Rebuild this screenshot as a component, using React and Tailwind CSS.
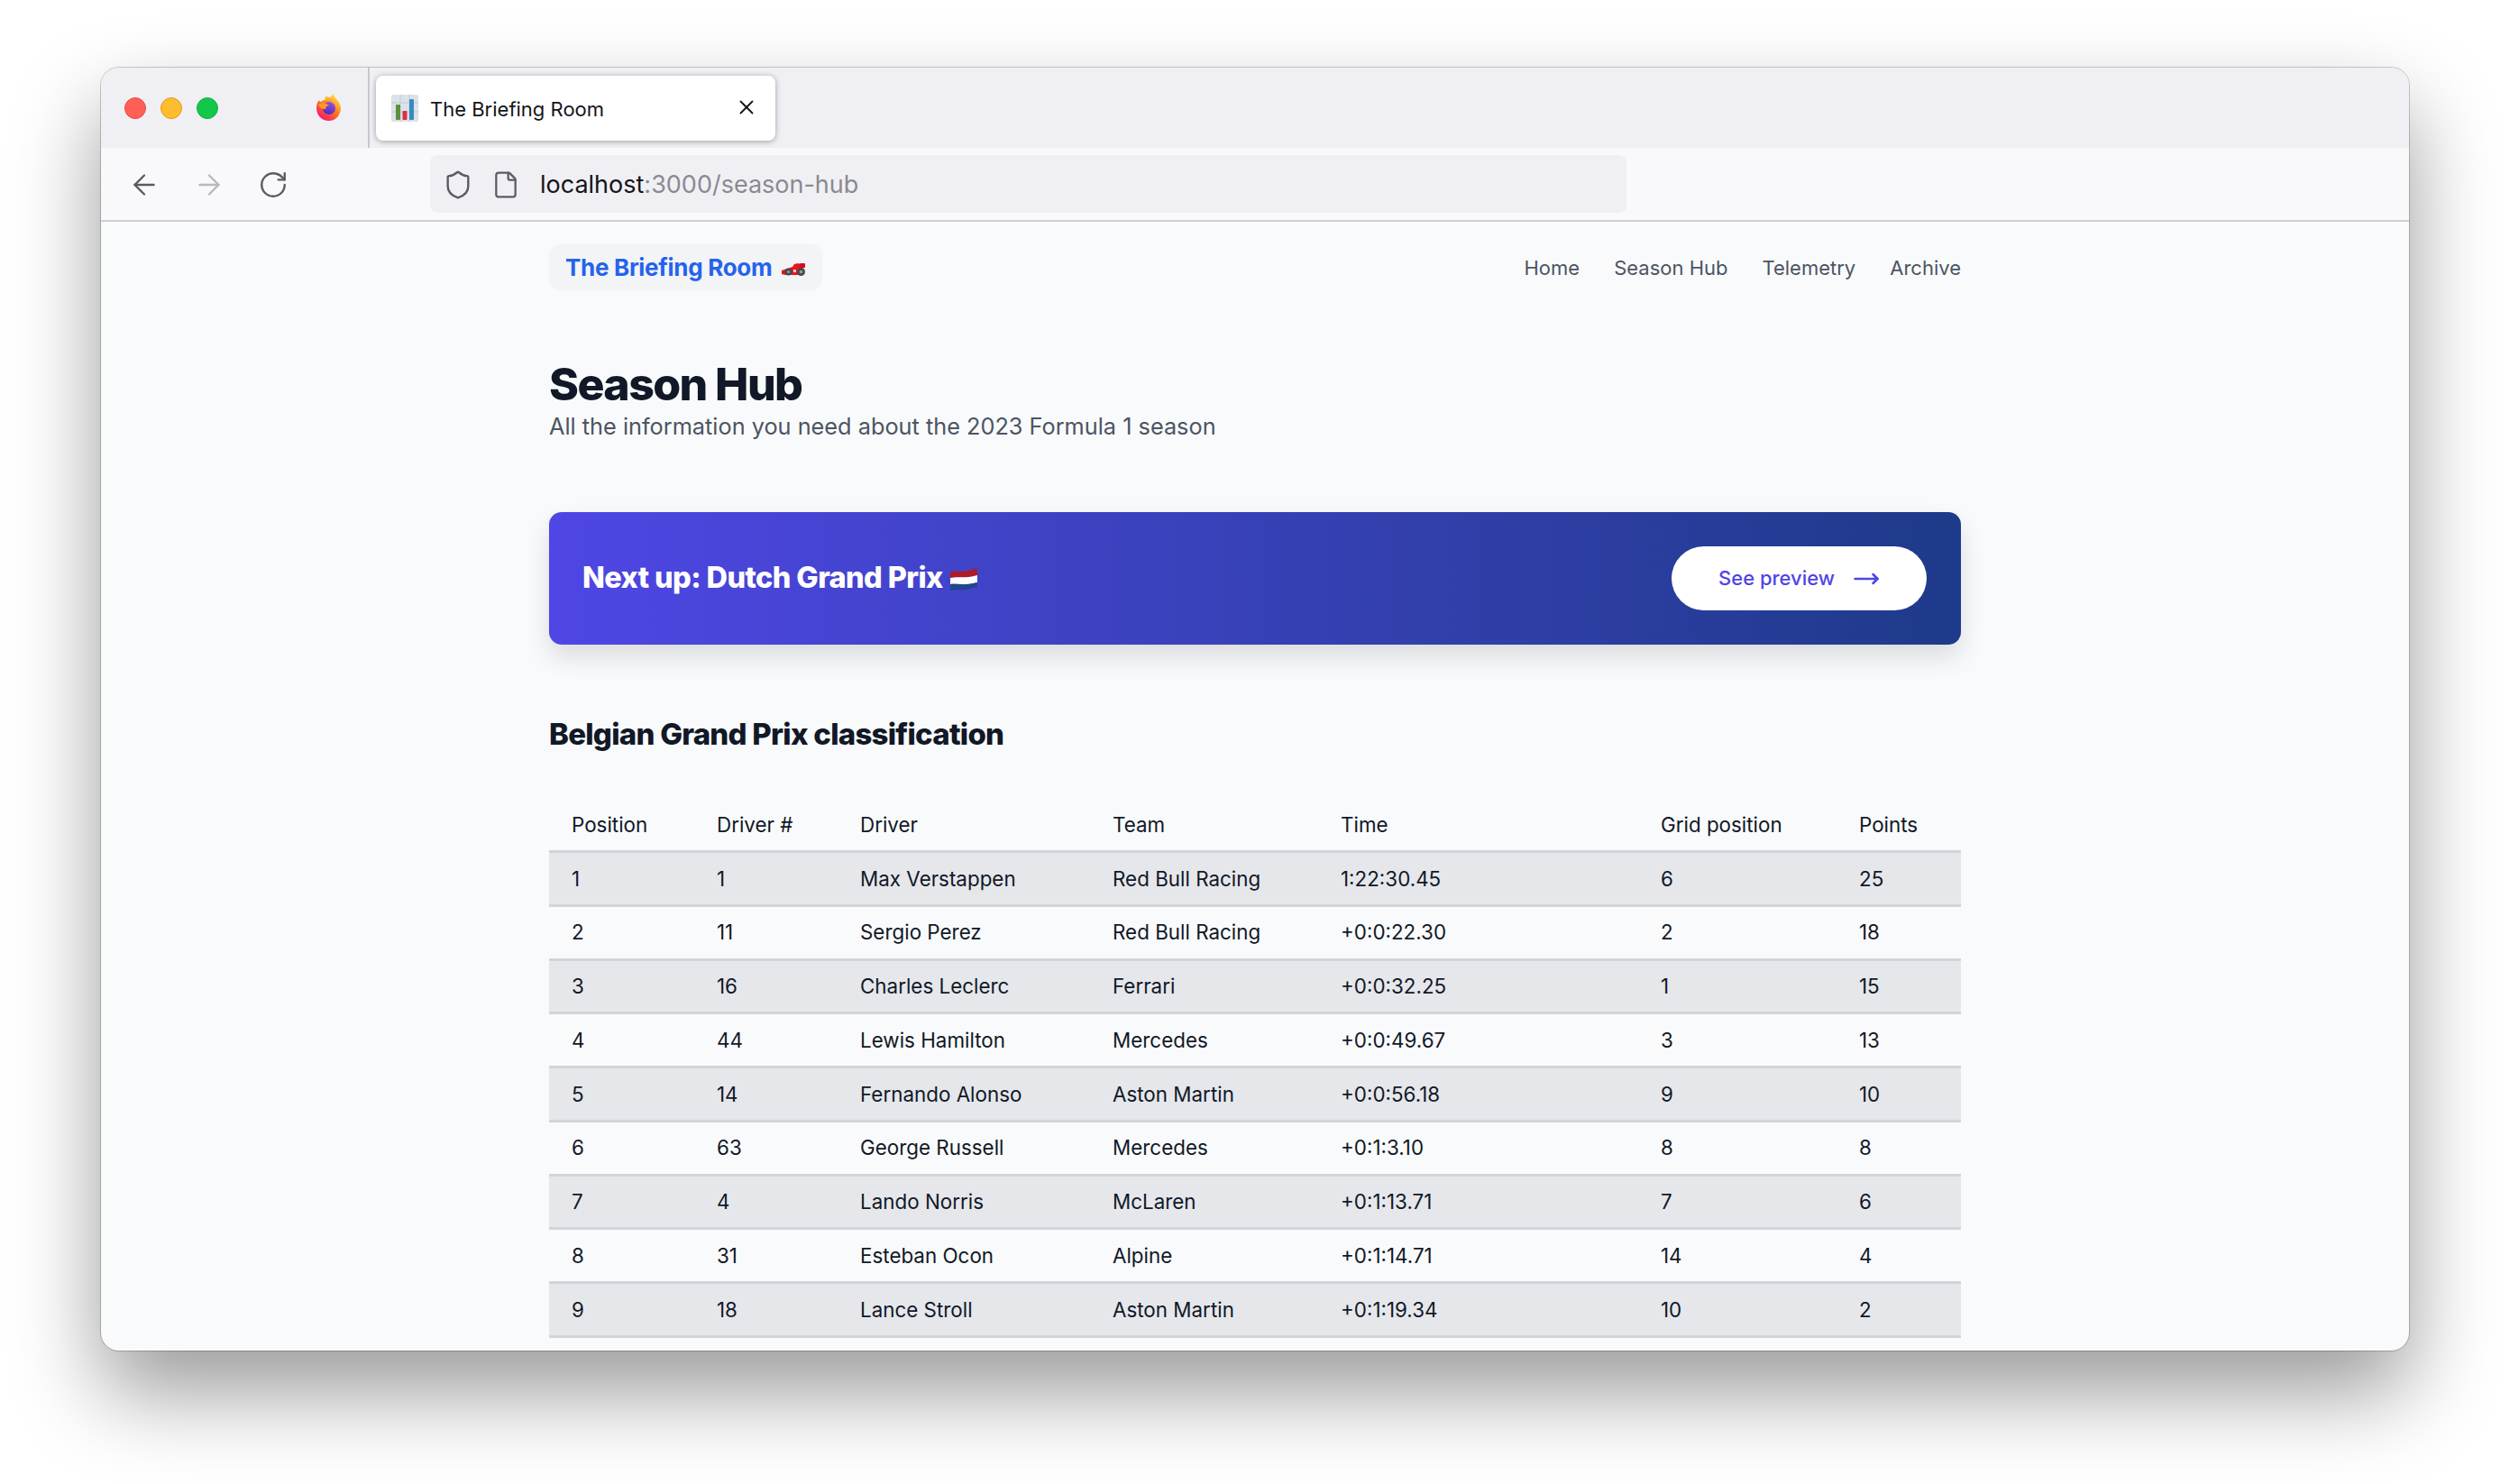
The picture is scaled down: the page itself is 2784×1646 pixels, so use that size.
import React from 'react';
import { ArrowLeft, ArrowRight, RotateCw, Shield, File, X, MoveRight } from 'lucide-react';

const rows = [
  ['1', '1', 'Max Verstappen', 'Red Bull Racing', '1:22:30.45', '6', '25'],
  ['2', '11', 'Sergio Perez', 'Red Bull Racing', '+0:0:22.30', '2', '18'],
  ['3', '16', 'Charles Leclerc', 'Ferrari', '+0:0:32.25', '1', '15'],
  ['4', '44', 'Lewis Hamilton', 'Mercedes', '+0:0:49.67', '3', '13'],
  ['5', '14', 'Fernando Alonso', 'Aston Martin', '+0:0:56.18', '9', '10'],
  ['6', '63', 'George Russell', 'Mercedes', '+0:1:3.10', '8', '8'],
  ['7', '4', 'Lando Norris', 'McLaren', '+0:1:13.71', '7', '6'],
  ['8', '31', 'Esteban Ocon', 'Alpine', '+0:1:14.71', '14', '4'],
  ['9', '18', 'Lance Stroll', 'Aston Martin', '+0:1:19.34', '10', '2'],
];

const headers = ['Position', 'Driver #', 'Driver', 'Team', 'Time', 'Grid position', 'Points'];
const colWidths = ['w-[161px]', 'w-[159px]', 'w-[280px]', 'w-[253px]', 'w-[355px]', 'w-[220px]', 'w-[138px]'];

function FirefoxIcon() {
  return (
    <svg width="32" height="32" viewBox="0 0 32 32">
      <defs>
        <linearGradient id="ffOuter" x1="0.8" y1="0.1" x2="0.2" y2="0.95">
          <stop offset="0" stopColor="#ffd93b" />
          <stop offset="0.45" stopColor="#ff7a1f" />
          <stop offset="1" stopColor="#f5156c" />
        </linearGradient>
        <linearGradient id="ffInner" x1="0.7" y1="0" x2="0.3" y2="1">
          <stop offset="0" stopColor="#9b4fe0" />
          <stop offset="1" stopColor="#4a2bb8" />
        </linearGradient>
      </defs>
      <path d="M20 1c1 3 4 5 6 8 3 4 4 9 2 13-2 6-7 9-12 9C8 31 2 25 2 17c0-4 1-7 3-9 0 1 1 2 2 2 2-2 5-3 8-3 2-1 4-3 5-6z" fill="url(#ffOuter)" />
      <circle cx="16" cy="17" r="7" fill="url(#ffInner)" />
      <path d="M4 13c3-2 6-2 9-1 1 1 2 1 3 1-1 1-2 2-3 2l-1 3c-3 0-6-1-8-5z" fill="#ff9a1f" />
      <path d="M12 4c3 0 6 2 9 4-3-1-7-1-10 1z" fill="#ffb52e" />
    </svg>
  );
}

function ChartIcon() {
  return (
    <svg width="30" height="30" viewBox="0 0 30 30">
      <rect width="30" height="30" rx="2" fill="#dbe3e9" />
      <path d="M0 9h30M0 19h30M10 0v30M20 0v30" stroke="#c9d3db" strokeWidth="1.5" />
      <rect x="5" y="11" width="5" height="17" rx="1" fill="#5c913b" />
      <rect x="12.5" y="18" width="5" height="10" rx="1" fill="#dd2e44" />
      <rect x="20" y="5" width="5" height="23" rx="1" fill="#3b88c3" />
    </svg>
  );
}

function CarIcon() {
  return (
    <svg width="27" height="15" viewBox="0 0 27 15">
      <path d="M0 9l6-2 6-2 2-3 4-1 3 1 2 2 1 7-6 3H4L0 13z" fill="#e5161d" />
      <rect x="20" y="1" width="6" height="5" rx="1" fill="#cf1219" />
      <rect x="13" y="8" width="3" height="3" fill="#f7c6c6" />
      <circle cx="7.5" cy="10.5" r="4" fill="#4a4a4a" />
      <circle cx="7.5" cy="10.5" r="1.6" fill="#9a9a9a" />
      <circle cx="21.5" cy="10.5" r="4.5" fill="#4a4a4a" />
      <circle cx="21.5" cy="10.5" r="1.8" fill="#9a9a9a" />
    </svg>
  );
}

function FlagIcon() {
  return (
    <svg width="30" height="26" viewBox="0 0 30 26">
      <path d="M0 5c8-1 14 2 30-4v8C16 13 8 10 0 12z" fill="#ae1c28" />
      <path d="M0 12c8-2 16 1 30-3v8C16 21 8 18 0 19z" fill="#ffffff" />
      <path d="M0 19c8-1 16 2 30-2v5C16 27 8 24 0 26z" fill="#21468b" />
    </svg>
  );
}

function BrowserChrome() {
  return (
    <>
      <div className="h-[89px] bg-[#f0f0f4] flex items-center pl-[26px]">
        <div className="w-6 h-6 rounded-full bg-[#ff5f57] border border-[#e8483f]" />
        <div className="w-6 h-6 rounded-full bg-[#febc2e] border border-[#e09e1f] ml-4" />
        <div className="w-6 h-6 rounded-full bg-[#13c74b] border border-[#10b040] ml-4" />
        <div className="ml-[107px] mt-[-2px]">
          <FirefoxIcon />
        </div>
        <div className="w-[2px] h-full bg-[#c8c8cc] ml-[27px]" />
        <div className="ml-[7px] w-[443px] h-[72px] bg-white rounded-[8px] shadow-[0_1px_6px_rgba(0,0,0,.35)] flex items-center pl-[17px] pr-[19px]">
          <ChartIcon />
          <span className="ml-[13px] text-[22px] text-[#15141a] flex-1 mt-[4px]">The Briefing Room</span>
          <X size={26} strokeWidth={1.7} className="text-[#15141a] mt-[-2px]" />
        </div>
      </div>
      <div className="h-[80px] bg-[#f9f9fb] flex items-center border-b-2 border-[#cfcfd3] box-content">
        <ArrowLeft size={36} strokeWidth={1.6} className="text-[#5b5b66] ml-[30px] mt-[2px]" />
        <ArrowRight size={36} strokeWidth={1.6} className="text-[#b8b8bf] ml-[36px] mt-[2px]" />
        <RotateCw size={34} strokeWidth={1.7} className="text-[#5b5b66] ml-[36px] mt-[2px]" />
        <div className="ml-[157px] w-[1327px] h-[64px] rounded-[8px] bg-[#f0f0f4] flex items-center pl-[14px]">
          <Shield size={34} strokeWidth={1.7} className="text-[#5b5b66] mt-[2px]" />
          <File size={32} strokeWidth={1.7} className="text-[#5b5b66] ml-[20px] mt-[2px]" />
          <span className="ml-[22px] text-[27px] text-[#15141a] mt-[2px]">
            localhost<span className="text-[#8a8a91]">:3000/season-hub</span>
          </span>
        </div>
      </div>
    </>
  );
}

export default function App() {
  return (
    <div className="w-[2784px] h-[1646px] bg-white pt-[75px] pl-[112px] overflow-hidden font-['Inter',sans-serif]">
      <div className="w-[2560px] h-[1423px] rounded-[20px] overflow-hidden bg-[#f9fafb] shadow-[0_0_0_1px_rgba(0,0,0,.2),0_46px_96px_rgba(0,0,0,.4)] flex flex-col">
        <BrowserChrome />
        <div className="w-[1566px] mx-auto flex-1">
          <div className="flex items-center justify-between mt-[25px]">
            <div className="h-[51px] w-[303px] rounded-[12px] bg-[#f3f4f6] flex items-center pl-[18px]">
              <span className="text-[26px] font-bold text-[#2563eb] tracking-[-0.3px]">The Briefing Room</span>
              <span className="ml-[11px] mt-[4px]"><CarIcon /></span>
            </div>
            <nav className="flex gap-[38px] text-[22px] text-[#4b5563] mt-[1px]">
              <span>Home</span>
              <span>Season Hub</span>
              <span>Telemetry</span>
              <span>Archive</span>
            </nav>
          </div>

          <h1 className="mt-[74px] text-[50px] leading-[60px] font-extrabold tracking-[-1.6px] text-[#111827]">Season Hub</h1>
          <p className="mt-[-1px] text-[25.3px] leading-[36px] text-[#4b5563]">All the information you need about the 2023 Formula 1 season</p>

          <div className="mt-[77px] h-[147px] rounded-[14px] bg-gradient-to-r from-[#4f46e5] to-[#1e3a8a] shadow-[0_14px_28px_rgba(0,0,0,.12)] flex items-center justify-between pl-[37px] pr-[38px]">
            <div className="flex items-center gap-[8px]">
              <span className="text-[32.5px] font-extrabold tracking-[-0.6px] text-white">Next up: Dutch Grand Prix</span>
              <FlagIcon />
            </div>
            <div className="h-[71px] w-[283px] rounded-full bg-white flex items-center pl-[52px]">
              <span className="text-[22px] font-medium text-[#4f46e5]">See preview</span>
              <MoveRight size={30} strokeWidth={2} className="text-[#4f46e5] ml-[20px]" />
            </div>
          </div>

          <h2 className="mt-[77px] text-[33px] leading-[44px] font-extrabold tracking-[-0.75px] text-[#111827]">Belgian Grand Prix classification</h2>

          <table className="mt-[51px] w-full table-fixed border-separate border-spacing-0 text-[22.4px] text-[#111827]">
            <thead>
              <tr>
                {headers.map((h, i) => (
                  <th key={h} className={`${colWidths[i]} h-[59px] pl-[25px] text-left font-normal border-b-[3px] border-[#d1d5db]`}>{h}</th>
                ))}
              </tr>
            </thead>
            <tbody>
              {rows.map((row, r) => (
                <tr key={row[0]} className={r % 2 === 0 ? 'bg-[#e5e7eb]' : ''}>
                  {row.map((cell, i) => (
                    <td key={i} className="h-[59.78px] pl-[25px] border-b-[3px] border-[#d1d5db]">{cell}</td>
                  ))}
                </tr>
              ))}
            </tbody>
          </table>
        </div>
      </div>
    </div>
  );
}
